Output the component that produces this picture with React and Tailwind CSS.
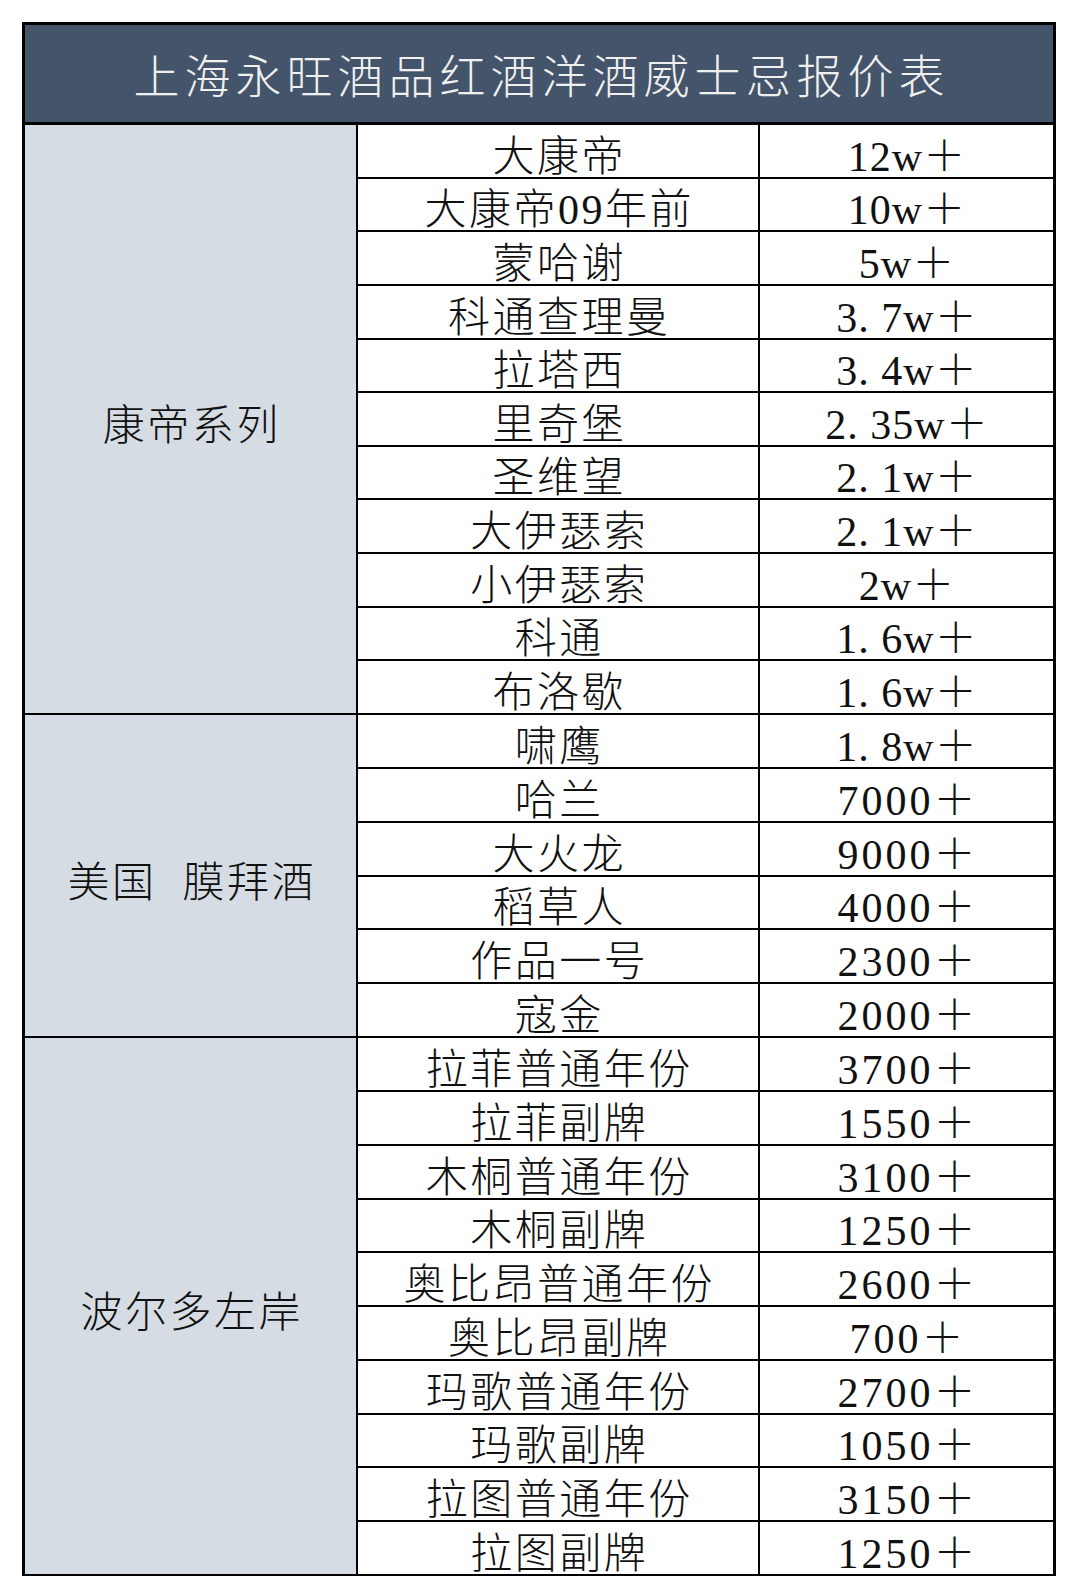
import React from "react"

const sections = [
  {
    label: "康帝系列",
    heights: [54, 53, 54, 54, 53, 54, 53, 54, 54, 53, 54],
    rows: [
      ["大康帝", "12w＋"],
      ["大康帝09年前", "10w＋"],
      ["蒙哈谢", "5w＋"],
      ["科通查理曼", "3. 7w＋"],
      ["拉塔西", "3. 4w＋"],
      ["里奇堡", "2. 35w＋"],
      ["圣维望", "2. 1w＋"],
      ["大伊瑟索", "2. 1w＋"],
      ["小伊瑟索", "2w＋"],
      ["科通", "1. 6w＋"],
      ["布洛歇", "1. 6w＋"],
    ],
  },
  {
    label: "美国  膜拜酒",
    heights: [54, 54, 54, 53, 54, 54],
    rows: [
      ["啸鹰", "1. 8w＋"],
      ["哈兰", "7000＋"],
      ["大火龙", "9000＋"],
      ["稻草人", "4000＋"],
      ["作品一号", "2300＋"],
      ["寇金", "2000＋"],
    ],
  },
  {
    label: "波尔多左岸",
    heights: [54, 54, 54, 53, 54, 54, 54, 53, 54, 54],
    rows: [
      ["拉菲普通年份", "3700＋"],
      ["拉菲副牌", "1550＋"],
      ["木桐普通年份", "3100＋"],
      ["木桐副牌", "1250＋"],
      ["奥比昂普通年份", "2600＋"],
      ["奥比昂副牌", "700＋"],
      ["玛歌普通年份", "2700＋"],
      ["玛歌副牌", "1050＋"],
      ["拉图普通年份", "3150＋"],
      ["拉图副牌", "1250＋"],
    ],
  },
]

const font = "font-['Liberation_Serif','Noto_Sans_CJK_SC',serif]"

export default function App() {
  return (
    <div className="w-[1080px] h-[1577px] bg-white overflow-hidden">
      <div className={`ml-[22px] mt-[22px] w-[1034px] border-x-[3px] border-t-[3px] border-black text-[#111] ${font}`}>
        <div className="h-[100px] border-b-[3px] border-black bg-[#44546a] flex items-center justify-center">
          <span className="text-[46px] leading-none tracking-[5px] pl-[5px] text-[#f0f0f0] font-light pt-[9px]">
            上海永旺酒品红酒洋酒威士忌报价表
          </span>
        </div>

        {sections.map((sec) => (
          <div key={sec.label} className="flex">
            <div className="w-[333px] shrink-0 border-r-2 border-b-2 border-black bg-[#d6dce4] flex items-center justify-center">
              <span className="text-[42px] leading-none tracking-[2.5px] pl-[2.5px] font-light whitespace-pre pt-[14px]">
                {sec.label}
              </span>
            </div>
            <div className="flex-1 flex flex-col">
              {sec.rows.map(([name, price], i) => {
                const h = sec.heights[i] === 54 ? "h-[54px]" : "h-[53px]"
                const track = price.includes("w") ? "tracking-[1px] pl-[1px]" : "tracking-[3px] pl-[3px]"
                return (
                  <div key={name} className={`${h} shrink-0 flex border-b-2 border-black`}>
                    <div className="w-[402px] shrink-0 border-r-2 border-black flex items-center justify-center">
                      <span className="text-[42px] leading-none tracking-[2.5px] pl-[2.5px] font-light whitespace-pre pt-[11px]">
                        {name}
                      </span>
                    </div>
                    <div className="flex-1 flex items-center justify-center">
                      <span className={`text-[42px] leading-none ${track} font-light whitespace-pre pt-[11px]`}>
                        {price}
                      </span>
                    </div>
                  </div>
                )
              })}
            </div>
          </div>
        ))}
      </div>
    </div>
  )
}
